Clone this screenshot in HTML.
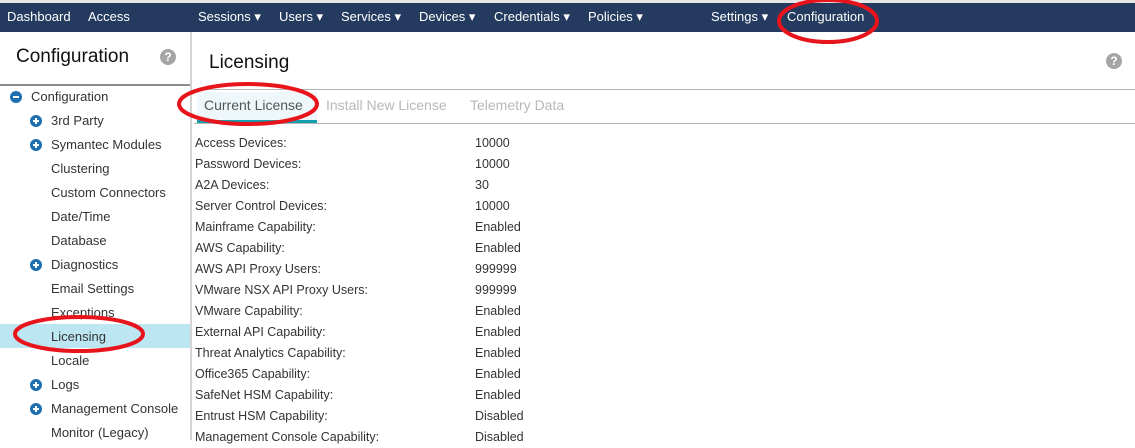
<!DOCTYPE html>
<html><head><style>
body{margin:0;width:1135px;height:440px;overflow:hidden;background:#fff;font-family:"Liberation Sans",Arial,sans-serif;position:relative}
.top{position:absolute;left:0;top:0;width:1135px;height:3px;background:#e6e6e6}
.nav{position:absolute;left:0;top:3px;width:1135px;height:29px;background:#243b5f;color:#fff;font-size:13px}
.nav span{position:absolute;top:6px;white-space:nowrap}
.side{position:absolute;left:0;top:32px;width:190px;height:408px;border-right:2px solid #d4d4d4}
.side h1{position:absolute;left:16px;top:14px;margin:0;font-weight:normal;font-size:19px;color:#111}
.q{position:absolute;width:16px;height:16px;border-radius:50%;background:#a5a5a5;color:#fff;font-size:12px;font-weight:bold;text-align:center;line-height:16px}
.sdiv{position:absolute;left:0;top:52px;width:190px;height:2px;background:#8d8d8d}
.it{position:absolute;font-size:13px;color:#333;white-space:nowrap}
.pl{position:absolute;left:30px;width:12px;height:12px;border-radius:50%;background:#1e6fb0}
.pl:before{content:"";position:absolute;left:3px;top:5px;width:6px;height:2px;background:#fff}
.pl.p:after{content:"";position:absolute;left:5px;top:3px;width:2px;height:6px;background:#fff}
.sel{position:absolute;left:0;top:292px;width:190px;height:24px;background:#bce6f1}
.main h2{position:absolute;left:209px;top:52px;margin:0;font-weight:normal;font-size:19px;color:#111}
.ln{position:absolute;left:194px;width:941px;height:1px;background:#b5b5b5}
.tab{position:absolute;top:97px;font-size:14px;color:#b8b8b8}
.row{position:absolute;font-size:12.5px;color:#333;white-space:nowrap}
</style></head><body>
<div class="top"></div>
<div class="nav">
<span style="left:7px">Dashboard</span><span style="left:88px">Access</span>
<span style="left:198px">Sessions ▾</span><span style="left:279px">Users ▾</span><span style="left:341px">Services ▾</span><span style="left:419px">Devices ▾</span><span style="left:494px">Credentials ▾</span><span style="left:588px">Policies ▾</span><span style="left:711px">Settings ▾</span><span style="left:787px">Configuration</span>
</div>
<div class="side">
<h1>Configuration</h1><div class="q" style="left:160px;top:17px">?</div>
<div class="sdiv"></div>
<div class="sel"></div>
</div>
<div class="pl" style="left:10px;top:91px"></div><div class="it" style="left:31px;top:89px">Configuration</div>
<div class="pl p" style="top:115px"></div><div class="it" style="left:51px;top:113px">3rd Party</div>
<div class="pl p" style="top:139px"></div><div class="it" style="left:51px;top:137px">Symantec Modules</div>
<div class="it" style="left:51px;top:161px">Clustering</div>
<div class="it" style="left:51px;top:185px">Custom Connectors</div>
<div class="it" style="left:51px;top:209px">Date/Time</div>
<div class="it" style="left:51px;top:233px">Database</div>
<div class="pl p" style="top:259px"></div><div class="it" style="left:51px;top:257px">Diagnostics</div>
<div class="it" style="left:51px;top:281px">Email Settings</div>
<div class="it" style="left:51px;top:305px">Exceptions</div>
<div class="it" style="left:51px;top:329px">Licensing</div>
<div class="it" style="left:51px;top:353px">Locale</div>
<div class="pl p" style="top:379px"></div><div class="it" style="left:51px;top:377px">Logs</div>
<div class="pl p" style="top:403px"></div><div class="it" style="left:51px;top:401px">Management Console</div>
<div class="it" style="left:51px;top:425px">Monitor (Legacy)</div>
<div class="main"><h2>Licensing</h2></div>
<div class="q" style="left:1106px;top:53px">?</div>
<div class="ln" style="top:89px"></div>
<div class="ln" style="top:123px"></div>
<div style="position:absolute;left:197px;top:92px;width:120px;height:29px;background:#eef8fb"></div>
<div style="position:absolute;left:197px;top:120px;width:120px;height:3px;background:#14a0b0"></div>
<div class="tab" style="left:204px;color:#555">Current License</div>
<div class="tab" style="left:326px">Install New License</div>
<div class="tab" style="left:470px">Telemetry Data</div>
<div class="row" style="left:195px;top:133px;line-height:21px">Access Devices:<br>Password Devices:<br>A2A Devices:<br>Server Control Devices:<br>Mainframe Capability:<br>AWS Capability:<br>AWS API Proxy Users:<br>VMware NSX API Proxy Users:<br>VMware Capability:<br>External API Capability:<br>Threat Analytics Capability:<br>Office365 Capability:<br>SafeNet HSM Capability:<br>Entrust HSM Capability:<br>Management Console Capability:</div>
<div class="row" style="left:475px;top:133px;line-height:21px">10000<br>10000<br>30<br>10000<br>Enabled<br>Enabled<br>999999<br>999999<br>Enabled<br>Enabled<br>Enabled<br>Enabled<br>Enabled<br>Disabled<br>Disabled</div>
<svg width="1135" height="440" style="position:absolute;left:0;top:0">
<g fill="none" stroke="#e8141c" stroke-width="4">
<ellipse cx="828" cy="21" rx="49" ry="21"/>
<ellipse cx="248" cy="104" rx="69" ry="20"/>
<ellipse cx="79" cy="334" rx="64" ry="17"/>
</g></svg>
</body></html>
